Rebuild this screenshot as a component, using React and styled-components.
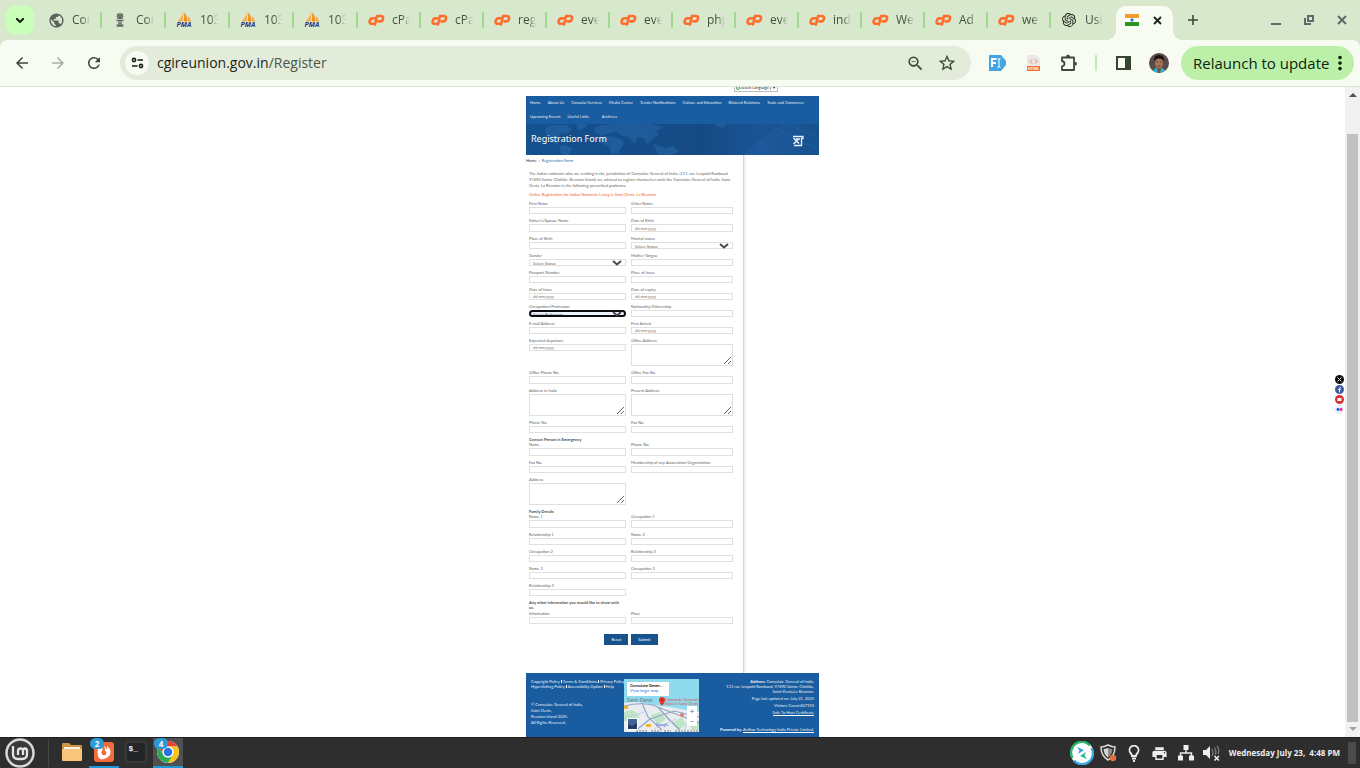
import React from 'react';
import styled, { createGlobalStyle, css } from 'styled-components';
import { MdPublic, MdArrowBack, MdArrowForward, MdRefresh, MdZoomOut, MdStarBorder, MdPrint, MdMoreVert } from 'react-icons/md';
import { SiOpenai } from 'react-icons/si';

const GlobalStyle = createGlobalStyle`
  * { box-sizing: border-box; }
  html, body { margin: 0; padding: 0; }
  body { font-family: 'Open Sans', 'Noto Sans', sans-serif; background: #fff; }
  button, input, select, textarea { font-family: inherit; margin: 0; }
  svg { display: block; flex: none; }
`;

const Desktop = styled.div`
  display: flex;
  flex-direction: column;
  height: 100vh;
  overflow: hidden;
`;

/* ---------- Browser: tab strip ---------- */

const TabStrip = styled.header`
  display: flex;
  align-items: flex-end;
  flex: none;
  height: 40px;
  background: #d8e8cc;
`;

const PlainButton = styled.button`
  display: flex;
  align-items: center;
  justify-content: center;
  flex: none;
  border: 0;
  padding: 0;
  background: none;
  color: ${(p) => p.$color || '#3b4a36'};
  width: ${(p) => p.$width || 36}px;
  height: ${(p) => p.$height || 34}px;
`;

const TabSearch = styled(PlainButton)`
  width: 28px;
  height: 28px;
  margin: 0 4px 6px 6px;
  border-radius: 9px;
  background: #c9ffb8;
`;

const Tab = styled.button`
  display: flex;
  align-items: center;
  gap: 8px;
  flex: none;
  width: ${(p) => (p.$wide ? 64 : 63)}px;
  height: 16px;
  margin-bottom: 12px;
  padding: 0 2px 0 10px;
  border: 0;
  border-right: 2px solid ${(p) => (p.$last ? 'transparent' : '#a0d890')};
  background: none;
  color: #45503f;
  text-align: left;
`;

const TabIcon = styled.span`
  display: flex;
  align-items: center;
  justify-content: center;
  flex: none;
  width: 16px;
`;

const TabText = styled.span`
  flex: 1;
  min-width: 0;
  white-space: nowrap;
  font-size: 12px;
  line-height: 16px;
  mask-image: linear-gradient(to right, #000 10px, transparent 18px);
`;

const ActiveTab = styled.div`
  position: relative;
  display: flex;
  align-items: center;
  justify-content: space-between;
  flex: none;
  width: 57px;
  height: 34px;
  margin-left: 2px;
  padding: 0 8px 6px 9px;
  border-radius: 10px 10px 0 0;
  background: #f8fbf2;
  &::before, &::after {
    content: '';
    position: absolute;
    bottom: 0;
    width: 10px;
    height: 10px;
  }
  &::before { left: -10px; background: radial-gradient(circle at 0 0, transparent 10px, #f8fbf2 10px); }
  &::after { right: -10px; background: radial-gradient(circle at 100% 0, transparent 10px, #f8fbf2 10px); }
`;

const WindowControls = styled.div`
  display: flex;
  margin-left: auto;
  padding-right: 2px;
`;

/* ---------- Browser: toolbar ---------- */

const ToolbarBack = styled.div`
  flex: none;
  background: #d8e8cc;
`;

const Toolbar = styled.div`
  display: flex;
  align-items: center;
  height: 47px;
  padding: 0 6px 0 4px;
  border-bottom: 1px solid #dce5d3;
  border-radius: 8px 8px 0 0;
  background: #f8fbf2;
`;

const Omnibox = styled.div`
  display: flex;
  align-items: center;
  flex: 1;
  height: 34px;
  margin: 0 8px;
  padding: 0 8px 0 5px;
  border-radius: 17px;
  background: #e3ecdb;
`;

const SiteInfo = styled(PlainButton)`
  width: 24px;
  height: 24px;
  border-radius: 50%;
  background: #f8fbf2;
`;

const Url = styled.div`
  flex: 1;
  padding-left: 8px;
  font-size: 14px;
  line-height: 20px;
  color: #1c2419;
  span { color: #4d5749; }
`;

const ToolDivider = styled.span`
  flex: none;
  width: 2px;
  height: 16px;
  margin: 0 8px;
  background: #bcf0a9;
`;

const Relaunch = styled.button`
  display: flex;
  align-items: center;
  justify-content: space-between;
  flex: none;
  width: 173px;
  height: 34px;
  margin-left: 4px;
  padding: 0 5px 0 12px;
  border: 0;
  border-radius: 17px;
  background: #bcf0a9;
  color: #10240c;
  font-size: 15px;
  white-space: nowrap;
`;

/* ---------- Viewport ---------- */

const Viewport = styled.div`
  position: relative;
  display: flex;
  flex: 1;
  min-height: 0;
  background: #fff;
`;

const Scroller = styled.main`
  display: flex;
  justify-content: center;
  flex: 1;
  min-width: 0;
  overflow: hidden;
`;

const Scrollbar = styled.div`
  display: flex;
  flex-direction: column;
  align-items: center;
  flex: none;
  width: 15px;
  padding: 6px 0;
  background: #f1f1f1;
`;

const ScrollThumb = styled.div`
  flex: 1;
  width: 11px;
  margin: 37px 0 5px;
  background: #c1c1c1;
`;

const SocialRail = styled.nav`
  position: absolute;
  top: 288px;
  right: 16px;
  display: flex;
  flex-direction: column;
  gap: 1px;
  a { display: block; }
`;

const Site = styled.div`
  display: flex;
  flex-direction: column;
  width: 293px;
  font-family: Lato, 'Open Sans', sans-serif;
  font-size: 4px;
  line-height: 6px;
  color: #5f5f5f;
`;

const LanguageBar = styled.div`
  display: flex;
  align-items: flex-end;
  justify-content: flex-end;
  flex: none;
  height: 5px;
  margin: 0 41px 4px 0;
  overflow: hidden;
`;

const LanguagePicker = styled.button`
  display: flex;
  align-items: center;
  gap: 1px;
  height: 8px;
  padding: 0 1px;
  border: 1px solid #bbb;
  background: #fff;
  font-size: 4px;
  line-height: 6px;
  color: #222;
  white-space: nowrap;
  i { width: 1px; height: 4px; background: #aaa; }
`;

const MainNav = styled.nav`
  flex: none;
  background: #1a5ca0;
`;

const NavRow = styled.div`
  display: flex;
  gap: 7px;
  height: 14px;
  padding-left: 4px;
  a {
    color: #e4edf6;
    text-decoration: none;
    line-height: 14px;
    white-space: nowrap;
  }
  a:nth-child(3) { margin-left: ${(p) => (p.$second ? 6 : 0)}px; }
`;

const Banner = styled.div`
  position: relative;
  display: flex;
  align-items: center;
  justify-content: space-between;
  flex: none;
  height: 31px;
  padding: 0 15px 2px 5px;
  overflow: hidden;
  background: linear-gradient(to right, #13518f, #164a84 60%, #1a5496 80%, #124a85);
  h1 {
    position: relative;
    margin: 0;
    font-family: 'Noto Sans', sans-serif;
    font-size: 9px;
    line-height: 12px;
    font-weight: 400;
    color: #fff;
  }
  > svg { position: relative; top: 2px; }
`;

const BannerMap = styled.div`
  position: absolute;
  inset: 0;
`;

const Content = styled.section`
  flex: 1;
  width: 218px;
  padding: 3px 10px 0 3px;
  border-right: 1px solid #d6d6d6;
  box-shadow: 1px 0 2px #e4e4e4;
`;

const Breadcrumb = styled.div`
  display: flex;
  gap: 2px;
  margin: 0 0 7px -3px;
  color: #444;
  a { color: #333; text-decoration: none; }
  a:last-child { color: #1a6fb5; }
`;

const Intro = styled.p`
  margin: 0 0 3px;
  line-height: 6px;
  white-space: nowrap;
  color: ${(p) => (p.$accent ? '#f0602f' : '#666')};
`;

const FormGrid = styled.div`
  display: grid;
  grid-template-columns: 97fr 102fr;
  column-gap: 5px;
`;

const GroupTitle = styled.h2`
  grid-column: 1;
  margin: 0;
  padding-bottom: ${(p) => (p.$long ? 1 : 0)}px;
  font-size: 4px;
  line-height: 5px;
  font-weight: 700;
  white-space: pre-line;
  color: #4c4c4c;
`;

const Field = styled.div`
  display: flex;
  flex-direction: column;
  grid-column: ${(p) => p.$col};
  padding-bottom: 4px;
  label {
    height: 6px;
    line-height: 5px;
    white-space: nowrap;
  }
`;

const control = css`
  width: 100%;
  border: 1px solid #e0e0e0;
  border-radius: 0;
  outline: 0;
  background: #fff;
  color: #666;
  font-size: 4px;
  line-height: 5px;
`;

const TextInput = styled.input`
  ${control}
  height: ${(p) => (p.$tall ? 8 : 7)}px;
  padding: 0 3px;
  &::placeholder { color: #777; opacity: 1; }
`;

const TextArea = styled.textarea`
  ${control}
  display: block;
  height: 22px;
  padding: 1px;
`;

const SelectWrap = styled.div`
  position: relative;
  svg { position: absolute; right: 4px; top: 1px; pointer-events: none; }
`;

const SelectBox = styled.select`
  ${control}
  display: block;
  appearance: none;
  height: 7px;
  padding: 1px 3px 0;
  ${(p) => p.$focused && css`
    border: 2px solid #0b0d10;
    border-radius: 4px;
    background: #eef3fb;
    padding: 0 2px;
  `}
`;

const Actions = styled.div`
  display: flex;
  justify-content: center;
  gap: 3px;
  padding: 6px 0 28px;
`;

const ActionButton = styled.button`
  height: 11px;
  padding: 0 7px;
  border: 0;
  background: #17528c;
  color: #fff;
  font-size: 4px;
  line-height: 11px;
`;

/* ---------- Site footer ---------- */

const SiteFooter = styled.footer`
  display: flex;
  flex: none;
  height: 64px;
  padding: 6px 5px 5px;
  background: #1a5ca0;
  color: #e6eef7;
  line-height: 5px;
  a { color: inherit; text-decoration: none; white-space: nowrap; }
`;

const FooterLeft = styled.div`
  flex: 93 1 0;
  min-width: 0;
  white-space: nowrap;
`;

const FooterLinks = styled.div`
  display: flex;
  gap: 1px;
  i { flex: none; width: 1px; height: 3px; margin-top: 1px; background: #fff; }
`;

const Copyright = styled.p`
  margin: 13px 0 0;
  line-height: 6px;
`;

const FooterMap = styled.div`
  position: relative;
  flex: none;
  width: 75px;
  height: 53px;
  overflow: hidden;
`;

const MapCard = styled.div`
  position: absolute;
  left: 3px;
  top: 3px;
  width: 42px;
  height: 14px;
  padding: 1px 3px;
  background: #fff;
  line-height: 5px;
  color: #111;
  white-space: nowrap;
  b { display: block; }
  a { color: #1a73e8; }
`;

const MapLabel = styled.span`
  position: absolute;
  left: ${(p) => p.$x}px;
  top: ${(p) => p.$y}px;
  font-size: ${(p) => p.$size || 4}px;
  line-height: 4px;
  color: ${(p) => p.$color};
  white-space: nowrap;
`;

const MapZoom = styled.div`
  position: absolute;
  right: 2px;
  bottom: 6px;
  display: flex;
  flex-direction: column;
  width: 10px;
  height: 20px;
  background: #fff;
  button {
    flex: 1;
    border: 0;
    padding: 0;
    background: none;
    color: #666;
    font-size: 8px;
    line-height: 8px;
  }
`;

const FooterRight = styled.address`
  flex: 115 1 0;
  min-width: 0;
  display: flex;
  flex-direction: column;
  align-items: flex-end;
  font-style: normal;
  text-align: right;
  white-space: nowrap;
  span { margin-top: 2px; }
  a { border-bottom: 1px solid #fff; }
  > a { margin-top: 2px; }
  p { margin: auto 0 0; }
`;

/* ---------- Taskbar ---------- */

const Taskbar = styled.footer`
  display: flex;
  align-items: center;
  flex: none;
  height: 31px;
  padding: 0 4px 0 5px;
  border-top: 1px solid #1f1f1f;
  background: #2e2e2e;
`;

const TaskDivider = styled.span`
  width: 1px;
  height: 28px;
  margin: 0 8px 0 13px;
  background: #474747;
`;

const TaskButton = styled.button`
  position: relative;
  display: flex;
  align-items: center;
  justify-content: center;
  flex: none;
  width: 30px;
  height: 30px;
  margin-right: 2px;
  padding: 0;
  border: 0;
  border-bottom: 2px solid ${(p) => (p.$running ? '#1e9bd7' : 'transparent')};
  background: ${(p) => (p.$active ? '#505050' : 'none')};
`;

const Badge = styled.span`
  position: absolute;
  left: 1px;
  top: 0;
  width: 14px;
  height: 11px;
  border-radius: 6px;
  background: #2a9bd6;
  color: #fff;
  font-size: 8px;
  font-weight: 700;
  line-height: 11px;
  text-align: center;
`;

const Tray = styled.div`
  display: flex;
  align-items: center;
  margin-left: auto;
`;

const TrayButton = styled(PlainButton)`
  width: 26px;
  height: 30px;
  color: #eee;
`;

const Clock = styled.time`
  padding: 0 8px 0 4px;
  font-size: 8px;
  font-weight: 700;
  line-height: 12px;
  color: #eee;
  white-space: pre;
`;

const ShowDesktop = styled.button`
  width: 8px;
  height: 22px;
  padding: 0;
  border: 0;
  background: #4b4b4b;
`;

/* ---------- Drawings ---------- */

const Svg = ({ w, h = w, box, children, ...rest }) => (
  <svg width={w} height={h} viewBox={box || `0 0 ${w} ${h}`} fill="none" aria-hidden="true" {...rest}>{children}</svg>
);

const CpanelIcon = () => (
  <Svg w={17} h={12} stroke="#ff6c2c" strokeWidth="2.600" strokeLinecap="round" strokeLinejoin="round">
    <path d="M7.200 4.200H4.500Q2.300 4.200 1.700 7T4 9.800H5" />
    <path d="M7 10.500 9 2H12.500Q15.600 2 15 4.800T12 7.400H10.500" />
  </Svg>
);

const PmaIcon = () => (
  <Svg w={16}>
    <path d="M1.500 9.500Q5 6 6.500 1.500 7.500 5 6.500 9.500Z" fill="#fbb04e" />
    <path d="M7.500 9.500Q9 5 7.500 0 11.500 4 11.500 9.500Z" fill="#f68b1f" />
    <path d="M12.200 9.500Q12.500 6 11.500 3.500 14.500 6 15 9.500Z" fill="#f9a63f" />
    <text x="8" y="15" textAnchor="middle" fontFamily="Open Sans, sans-serif" fontSize="7" fontWeight="700" fontStyle="italic" fill="#34347c">PMA</text>
  </Svg>
);

const EmblemIcon = () => (
  <Svg w={12} h={16} box="2 0 12 16">
    <path d="M5 2 6.500 1 8 1.500 9.500 1 11 2 11.500 4.500 10.500 7H5.500L4.500 4.500Z" fill="#737b6f" />
    <path d="M4 7.500H12V9.500H4Z" fill="#99a192" />
    <path d="M6 9.500H10V12H11.500V15H4.500V12H6Z" fill="#858d80" />
    <path d="M6 3.500h1M9 3.500h1M7 5.500h2M6 8.500h4M6 13.500h4" stroke="#4f564b" />
  </Svg>
);

const FlagIcon = () => (
  <Svg w={14} h={12}>
    <path d="M0 0H14V4H0Z" fill="#f99a2c" />
    <path d="M0 4H14V8H0Z" fill="#fff" />
    <path d="M0 8H14V12H0Z" fill="#2c9420" />
    <circle cx="7" cy="6" r="1.700" fill="#2e7fd8" />
  </Svg>
);

const SiteInfoIcon = () => (
  <Svg w={13} h={12} stroke="#1f281b" strokeWidth="1.600">
    <circle cx="3" cy="3" r="1.600" /><path d="M6.500 3H12" />
    <circle cx="10" cy="9" r="1.600" /><path d="M1 9H6.500" />
  </Svg>
);

const PuzzleIcon = () => (
  <Svg w={18} stroke="currentColor" strokeWidth="1.800" strokeLinejoin="round">
    <path d="M2 3.500H14V16H2V12.500Q4.500 12 4.500 9.800T2 7Z" />
    <path d="M6 3Q6 .5 8 .5T10 3Z" fill="currentColor" stroke="none" />
    <path d="M14.500 7.800Q17 7.800 17 9.800T14.500 11.800Z" fill="currentColor" stroke="none" />
  </Svg>
);

const FontIcon = () => (
  <Svg w={17} h={16}>
    <path d="M0 0H12L17 6V10L12 16H0Z" fill="#45a4e3" />
    <path d="M3 12V4H7.500M3 8H7" stroke="#fff" strokeWidth="1.800" />
    <path d="M8.500 3.500Q10 3.500 10 5V11Q10 12.500 8.500 12.500M11.500 3.500Q10 3.500 10 5M11.500 12.500Q10 12.500 10 11" stroke="#fff" />
  </Svg>
);

const HtmlIcon = () => (
  <Svg w={13} h={17}>
    <path d="M0 0H9L13 4V11H0Z" fill="#e8e8e4" />
    <path d="M0 11H13V16H0Z" fill="#f4683a" />
    <path d="M5 4.500 3 6.500 5 8.500M8 4.500 10 6.500 8 8.500" stroke="#f07a55" />
    <text x="6.500" y="15" textAnchor="middle" fontFamily="Open Sans, sans-serif" fontSize="4" fontWeight="700" fill="#fff">HTML</text>
  </Svg>
);

const SidePanelIcon = () => (
  <Svg w={15} h={14}>
    <path d="M1 1H14V13H1Z" stroke="#36452f" strokeWidth="2" />
    <path d="M9 1H14V13H9Z" fill="#36452f" />
  </Svg>
);

const AvatarIcon = () => (
  <Svg w={20}>
    <defs><clipPath id="avatar"><circle cx="10" cy="10" r="10" /></clipPath></defs>
    <g clipPath="url(#avatar)">
      <path d="M0 0H20V20H0Z" fill="#5a4a48" />
      <path d="M4 20 5 16 8 15H12L15 16 17 20Z" fill="#28b6d8" />
      <ellipse cx="10" cy="10" rx="4" ry="5.500" fill="#a8745a" />
      <path d="M5.500 9Q4 2 10 2T14.500 9Q14 5.500 10 5.500T5.500 9Z" fill="#17120f" />
      <path d="M8 15H12L11 20H9Z" fill="#7c5040" />
      <path d="M7.500 9H9M11 9H12.500M8.500 13H11.500" stroke="#5e3c2e" />
    </g>
  </Svg>
);

const ChevronIcon = () => (
  <Svg w={10} h={6}><path d="M1 1 5 4.500 9 1" stroke="#4a4a4a" strokeWidth="2" /></Svg>
);

const WorldMap = () => (
  <BannerMap>
    <Svg w="100%" h={31} box="0 0 293 31" preserveAspectRatio="xMinYMin slice">
      <g fill="#2a6bb0" opacity=".5">
        <path d="M19 4 25 1H40L46 5 40 10 36 8 32 12 35 16 31 21 25 17 20 11Z" />
        <path d="M33 22 40 21 46 25 42 31H36Z" />
        <path d="M50 0H62L58 5 52 6Z" />
        <path d="M68 4 75 1 90 0H125L138 3 130 7 133 11 126 15 121 20 118 14 112 13 108 20 103 13 96 12 91 8 84 9 76 12 70 9Z" />
        <path d="M74 13 86 12 96 16 98 20 92 29 86 31 83 22 75 19Z" />
        <path d="M127 20 140 24 147 22 153 27 146 31H133Z" />
        <path d="M190 0H201L197 4 191 3Z" />
      </g>
      <path d="M215 31 255 0H293V31Z" fill="#2b6db5" opacity=".2" />
      <path d="M240 0 293 26M262 0 293 14" stroke="#3d80c6" opacity=".25" />
    </Svg>
  </BannerMap>
);

const ScrollIcon = () => (
  <Svg w={12} h={12} stroke="#e8f0f8">
    <path d="M1 1.500H11V3.500H9.500V10.500H2" strokeWidth="1.300" />
    <path d="M1.500 3 7 8.500M6.500 4 1.500 9M4 4H8" strokeWidth="1.500" />
  </Svg>
);

const StreetMap = () => (
  <Svg w={75} h={53}>
    <path d="M0 0H75V53H0Z" fill="#90daee" />
    <path d="M0 24Q10 22 20 24T38 27Q48 28 56 30L75 33V53H0Z" fill="#e9edf0" />
    <path d="M0 33 8 31 16 36 12 43 0 42ZM26 36 36 33 42 40 34 46ZM48 44 58 38 62 46 54 51ZM66 44 75 41V53H68Z" fill="#bfe5c6" />
    <path d="M0 27Q20 22 34 28T60 38L75 44M18 24 24 38 40 53M34 28Q44 40 58 53M10 53 26 40 50 32 75 38" stroke="#8ea6c6" strokeWidth="1.200" />
    <path d="M0 40 20 33M30 50 52 40M60 53 66 34" stroke="#c3cddb" />
    <path d="M38 18a3 3 0 0 1 3 3q0 2.500-3 6q-3-3.500-3-6a3 3 0 0 1 3-3Z" fill="#e6352b" />
    <circle cx="38" cy="21" r="1" fill="#8f1d17" />
    <circle cx="58" cy="36" r="2" fill="#e77a76" />
    <path d="M22 45H27V48H22ZM0 27H4V30H0Z" fill="#f5b72a" />
    <path d="M3 39H14V51H3Z" fill="#fff" />
    <path d="M4 40H13V50H4Z" fill="#243a60" />
    <path d="M4 40H13V44L8 47 4 45Z" fill="#416593" />
    <path d="M7 51H75V53H7Z" fill="#edf1f3" />
    <path d="M12 52H24M27 52H37M40 52H47M51 52H74" stroke="#777" strokeDasharray="2 1" />
  </Svg>
);

const MintIcon = () => (
  <Svg w={30}>
    <circle cx="15" cy="15" r="13.500" fill="#3a3a3a" stroke="#d8d8d8" strokeWidth="2.500" />
    <path d="M8 8V16Q8 21 13 21H17Q22 21 22 16V13Q22 10.500 20 10.500T18 13V17M18 13Q18 10.500 15.500 10.500T13 13V17" stroke="#e4e4e4" strokeWidth="2.300" />
  </Svg>
);

const FolderIcon = () => (
  <Svg w={20} h={19}>
    <path d="M0 1Q0 0 1 0H7L9 2H19Q20 2 20 3V8H0Z" fill="#cf9444" />
    <path d="M2 4H18V8H2Z" fill="#f6f1e8" />
    <path d="M0 6H20V17Q20 18 19 18H1Q0 18 0 17Z" fill="#f7c67c" />
  </Svg>
);

const FirefoxIcon = () => (
  <Svg w={20}>
    <rect width="20" height="20" rx="3" fill="#f56a3d" />
    <path d="M10 4Q12 5 12.500 7 14 6 13 4 17 7 16.500 11T10 17 3.500 11Q3 8 5 5L6 7Q7.500 5.500 9 7L8 9Q6.500 10 8 12T12 12Q13 10 11 9 11 6 10 4Z" fill="#fff" />
    <circle cx="10" cy="11" r="2.300" fill="#f56a3d" />
  </Svg>
);

const TerminalIcon = () => (
  <Svg w={22}>
    <rect x="1" y="1" width="20" height="20" rx="3" fill="#232527" stroke="#454849" />
    <text x="3.500" y="10" fontFamily="Liberation Mono, monospace" fontSize="8" fontWeight="700" fill="#f2f2f2">$_</text>
  </Svg>
);

const ChromeIcon = () => (
  <Svg w={24} box="0 0 48 48">
    <circle cx="24" cy="24" r="22" fill="#fff" />
    <path d="M5 13A22 22 0 0 1 43 13H24A11 11 0 0 0 14.500 29.500Z" fill="#ea4335" />
    <path d="M43 13A22 22 0 0 1 24 46L33.500 29.500A11 11 0 0 0 24 13Z" fill="#fbc116" />
    <path d="M5 13 14.500 29.500A11 11 0 0 0 33.500 29.500L24 46A22 22 0 0 1 5 13Z" fill="#2da94f" />
    <circle cx="24" cy="24" r="11" fill="#fff" />
    <circle cx="24" cy="24" r="8.500" fill="#2273e6" />
  </Svg>
);

const SyncIcon = () => (
  <Svg w={24}>
    <circle cx="12" cy="12" r="11.500" fill="#fff" />
    <path d="M2.500 17A10.800 10.800 0 0 1 20 4.500" stroke="#2ab56b" strokeWidth="2.400" />
    <path d="M21.500 7A10.800 10.800 0 0 1 4 19.500" stroke="#39a9e4" strokeWidth="2.400" />
    <path d="M7 6 14 9 8 13 9.500 9.500Z" fill="#2f9fe0" />
    <path d="M17 18 10 15 16 11 14.500 14.500Z" fill="#2ab58b" />
  </Svg>
);

const ShieldIcon = () => (
  <Svg w={18}>
    <path d="M9 1Q13 3 16 3 16 12 9 16 2 12 2 3 5 3 9 1Z" stroke="#dcdcdc" strokeWidth="1.500" />
    <path d="M9 4Q12 5 13.500 5 13 11 9 13.500Z" fill="#8b8b8b" />
    <path d="M9 4Q6 5 4.500 5 5 11 9 13.500Z" fill="#d6d6d6" />
    <circle cx="14" cy="14" r="3.200" fill="#e0703c" />
  </Svg>
);

const BulbIcon = () => (
  <Svg w={12} h={17} stroke="#eee" strokeWidth="1.800">
    <path d="M4 11Q4 9.500 2.500 8A4.500 4.500 0 1 1 9.500 8Q8 9.500 8 11Z" />
    <path d="M4 13.500H8M5 16H7" />
  </Svg>
);

const NetworkIcon = () => (
  <Svg w={16}>
    <path d="M5.500 0H10.500V5H5.500ZM0 10.500H5V15.500H0ZM11 10.500H16V15.500H11Z" fill="#eee" />
    <path d="M8 5V8M2.500 11V8H13.500V11" stroke="#eee" strokeWidth="1.400" />
  </Svg>
);

const VolumeIcon = () => (
  <Svg w={17} h={16}>
    <path d="M0 5H3L7 1V14L3 10H0Z" fill="#eee" />
    <path d="M9 4Q11 7.500 9 11M11.500 2.500Q14 7 12 10M14 1Q17 5 15 9" stroke="#777" strokeWidth="1.400" />
    <path d="M11.500 11 16 15.500M16 11 11.500 15.500" stroke="#eee" strokeWidth="1.500" />
  </Svg>
);

const SocialIcon = ({ kind }) => (
  <Svg w={9}>
    {kind === 'x' && <><circle cx="4.500" cy="4.500" r="4.500" fill="#0c0c0c" /><path d="M2.500 2.500 6.500 6.500M6.500 2.500 2.500 6.500" stroke="#ddd" /></>}
    {kind === 'facebook' && <><circle cx="4.500" cy="4.500" r="4.500" fill="#3c5ba0" /><path d="M5.800 2.500Q4.500 2.300 4.500 3.500V7.500M3.200 4.500H5.800" stroke="#fff" /></>}
    {kind === 'youtube' && <><circle cx="4.500" cy="4.500" r="4.500" fill="#d8322f" /><path d="M2.500 3H6.500V6H2.500Z" fill="#fff" /></>}
    {kind === 'flickr' && <><circle cx="4.500" cy="4.500" r="4.500" fill="#ececf2" /><circle cx="3" cy="4.500" r="1.400" fill="#0d63dc" /><circle cx="6" cy="4.500" r="1.400" fill="#ff1a86" /></>}
  </Svg>
);

/* ---------- Data ---------- */

const favicons = {
  globe: <MdPublic size={17} color="#5a6160" />,
  emblem: <EmblemIcon />,
  pma: <PmaIcon />,
  cpanel: <CpanelIcon />,
  openai: <SiOpenai size={14} color="#1f241d" />,
};

const tabs = [
  ['globe', 'Cor'], ['emblem', 'Cor'], ['pma', '103'], ['pma', '103'], ['pma', '103'],
  ['cpanel', 'cPa'], ['cpanel', 'cPa'], ['cpanel', 'reg'], ['cpanel', 'eve'], ['cpanel', 'eve'],
  ['cpanel', 'php'], ['cpanel', 'eve'], ['cpanel', 'ind'], ['cpanel', 'We'], ['cpanel', 'Ad'],
  ['cpanel', 'we'], ['openai', 'Usi'],
];

const navFirst = ['Home', 'About Us', 'Consular Services', 'Media Center', 'Tender Notifications', 'Culture and Education', 'Bilateral Relations', 'Trade and Commerce'];
const navSecond = ['Upcoming Events', 'Useful Links', 'Archives'];

const DATE = 'dd.mm.yyyy';
const f = (label, extra = {}) => ({ label, ...extra });

const rows = [
  { cells: [f('First Name'), f('Other Name')] },
  { tall: true, cells: [f("Father's/Spouse Name"), f('Date of Birth', { placeholder: DATE })] },
  { cells: [f('Place of Birth'), f('Marital status', { select: 'Select Status' })] },
  { cells: [f('Gender', { select: 'Select Status' }), f('Mother Tongue')] },
  { cells: [f('Passport Number'), f('Place of Issue')] },
  { cells: [f('Date of Issue', { placeholder: DATE }), f('Date of expiry', { placeholder: DATE })] },
  { cells: [f('Occupation/Profession', { select: 'Select Profession', focused: true }), f('Nationality/Citizenship')] },
  { cells: [f('E-mail Address'), f('First Arrival', { placeholder: DATE })] },
  { cells: [f('Expected departure', { placeholder: DATE }), f('Office Address', { area: true })] },
  { tall: true, cells: [f('Office Phone No.'), f('Office Fax No.')] },
  { cells: [f('Address in India', { area: true }), f('Present Address', { area: true })] },
  { cells: [f('Phone No.'), f('Fax No.')] },
  { title: 'Contact Person in Emergency' },
  { tall: true, cells: [f('Name'), f('Phone No.')] },
  { cells: [f('Fax No.'), f('Membership of any Association/Organization.')] },
  { cells: [f('Address', { area: true })] },
  { title: 'Family Details' },
  { tall: true, cells: [f('Name 1'), f('Occupation 1')] },
  { cells: [f('Relationship 1'), f('Name 2')] },
  { cells: [f('Occupation 2'), f('Relationship 2')] },
  { cells: [f('Name 3'), f('Occupation 3')] },
  { cells: [f('Relationship 3')] },
  { title: 'Any other information you would like to share with\nus.', long: true },
  { cells: [f('Information'), f('Place')] },
];

const FormField = ({ id, col, tall, label, placeholder, select, focused, area }) => (
  <Field $col={col}>
    <label htmlFor={id}>{label}</label>
    {area && <TextArea id={id} />}
    {select && (
      <SelectWrap>
        <SelectBox id={id} $focused={focused}><option>{select}</option></SelectBox>
        <ChevronIcon />
      </SelectWrap>
    )}
    {!area && !select && <TextInput id={id} type="text" placeholder={placeholder} $tall={tall} />}
  </Field>
);

const NavLinks = ({ items }) => items.map((item) => <a key={item} href="#top">{item}</a>);

export default function App() {
  return (
    <Desktop>
      <GlobalStyle />
      <TabStrip>
        <TabSearch aria-label="Search tabs"><Svg w={8} h={5}><path d="M0 0 4 4 8 0" stroke="#162012" strokeWidth="2" /></Svg></TabSearch>
        {tabs.map(([icon, text], i) => (
          <Tab key={i} $wide={i < 5} $last={i === tabs.length - 1}>
            <TabIcon>{favicons[icon]}</TabIcon>
            <TabText>{text}</TabText>
          </Tab>
        ))}
        <ActiveTab>
          <FlagIcon />
          <PlainButton $width={16} $height={16} aria-label="Close tab"><Svg w={9}><path d="M1 1 8 8M8 1 1 8" stroke="#1c2419" strokeWidth="1.800" /></Svg></PlainButton>
        </ActiveTab>
        <PlainButton $width={40} $height={40} aria-label="New tab"><Svg w={10}><path d="M5 0V10M0 5H10" stroke="currentColor" strokeWidth="1.600" /></Svg></PlainButton>
        <WindowControls>
          <PlainButton $width={33} $height={40} $color="#62686a" aria-label="Minimize"><Svg w={10}><path d="M0 9H10" stroke="currentColor" strokeWidth="2" /></Svg></PlainButton>
          <PlainButton $width={33} $height={40} $color="#62686a" aria-label="Restore"><Svg w={10}><path d="M4 1H9V6H4ZM1 3V9H7" stroke="currentColor" strokeWidth="2" /></Svg></PlainButton>
          <PlainButton $width={33} $height={40} $color="#62686a" aria-label="Close"><Svg w={10}><path d="M1 1 9 9M9 1 1 9" stroke="currentColor" strokeWidth="2" /></Svg></PlainButton>
        </WindowControls>
      </TabStrip>

      <ToolbarBack>
        <Toolbar>
          <PlainButton aria-label="Back"><MdArrowBack size={18} /></PlainButton>
          <PlainButton aria-label="Forward" $color="#a7aea2"><MdArrowForward size={18} /></PlainButton>
          <PlainButton aria-label="Reload"><MdRefresh size={18} /></PlainButton>
          <Omnibox>
            <SiteInfo aria-label="Site information"><SiteInfoIcon /></SiteInfo>
            <Url>cgireunion.gov.in<span>/Register</span></Url>
            <PlainButton $width={32} aria-label="Zoom"><MdZoomOut size={19} /></PlainButton>
            <PlainButton $width={32} aria-label="Bookmark"><MdStarBorder size={20} /></PlainButton>
          </Omnibox>
          <PlainButton aria-label="Font finder"><FontIcon /></PlainButton>
          <PlainButton aria-label="HTML viewer"><HtmlIcon /></PlainButton>
          <PlainButton aria-label="Extensions"><PuzzleIcon /></PlainButton>
          <ToolDivider />
          <PlainButton aria-label="Side panel"><SidePanelIcon /></PlainButton>
          <PlainButton aria-label="Profile"><AvatarIcon /></PlainButton>
          <Relaunch>Relaunch to update<MdMoreVert size={22} /></Relaunch>
        </Toolbar>
      </ToolbarBack>

      <Viewport>
        <Scroller>
          <Site>
            <LanguageBar>
              <LanguagePicker>
                <Svg w={4}><circle cx="2" cy="2" r="1.500" stroke="#3a9a5b" /></Svg>
                Select Language<i />▼
              </LanguagePicker>
            </LanguageBar>
            <MainNav>
              <NavRow><NavLinks items={navFirst} /></NavRow>
              <NavRow $second><NavLinks items={navSecond} /></NavRow>
            </MainNav>
            <Banner>
              <WorldMap />
              <h1>Registration Form</h1>
              <ScrollIcon />
            </Banner>
            <Content>
              <Breadcrumb><a href="#home">Home</a>›<a href="#form">Registration Form</a></Breadcrumb>
              <Intro>
                The Indian nationals who are residing in the jurisdiction of Consulate General of India, (111, rue Leopold Rambaud<br />
                97490 Sainte-Clotilde, Reunion Island) are advised to register themselves with the Consulate General of India, Saint<br />
                Denis, La Réunion in the following prescribed proforma.
              </Intro>
              <Intro $accent>Online Registration for Indian Nationals Living in Saint Denis, La Réunion.</Intro>
              <form onSubmit={(e) => e.preventDefault()}>
                <FormGrid>
                  {rows.map((row, r) => row.title
                    ? <GroupTitle key={r} $long={row.long}>{row.title}</GroupTitle>
                    : row.cells.map((cell, c) => (
                      <FormField key={`${r}-${c}`} id={`field-${r}-${c}`} col={c + 1} tall={row.tall} {...cell} />
                    )))}
                </FormGrid>
                <Actions>
                  <ActionButton type="reset">Reset</ActionButton>
                  <ActionButton type="submit">Submit</ActionButton>
                </Actions>
              </form>
            </Content>
            <SiteFooter>
              <FooterLeft>
                <FooterLinks><a href="#c">Copyright Policy</a><i /><a href="#t">Terms &amp; Conditions</a><i /><a href="#p">Privacy Policy</a></FooterLinks>
                <FooterLinks><a href="#h">Hyperlinking Policy</a><i /><a href="#a">Accessibility Option</a><i /><a href="#help">Help</a></FooterLinks>
                <Copyright>
                  © Consulate General of India,<br />Saint Denis,<br />Reunion Island 2025.<br />All Rights Reserved.
                </Copyright>
              </FooterLeft>
              <FooterMap>
                <StreetMap />
                <MapCard><b>Consulate Gener...</b><a href="#map">View larger map</a></MapCard>
                <MapLabel $x={3} $y={19} $size={5} $color="#66707a">Saint-Denis</MapLabel>
                <MapLabel $x={41} $y={19} $color="#dc4a43">Consulate General of</MapLabel>
                <MapLabel $x={41} $y={23} $color="#dc4a43">India in Saint Denis</MapLabel>
                <MapLabel $x={32} $y={44} $color="#3f6fd8">Google</MapLabel>
                <MapZoom><button type="button">+</button><button type="button">−</button></MapZoom>
              </FooterMap>
              <FooterRight>
                <div><b>Address:</b> Consulate General of India,</div>
                <div>111 rue Léopold Rambaud, 97490 Sainte-Clotilde,</div>
                <div>Saint-Denis,La Réunion.</div>
                <span>Page last updated on: July 21, 2025</span>
                <span>Visitors Count:407190</span>
                <a href="#cert">Safe To Host Certificate</a>
                <p><b>Powered by:</b> <a href="#ardhas">Ardhas Technology India Private Limited.</a></p>
              </FooterRight>
            </SiteFooter>
          </Site>
        </Scroller>
        <SocialRail>
          {['x', 'facebook', 'youtube', 'flickr'].map((kind) => <a key={kind} href={`#${kind}`} aria-label={kind}><SocialIcon kind={kind} /></a>)}
        </SocialRail>
        <Scrollbar>
          <Svg w={8} h={4}><path d="M0 4 4 0 8 4Z" fill="#505050" /></Svg>
          <ScrollThumb />
          <Svg w={8} h={4}><path d="M0 0 4 4 8 0Z" fill="#a3a3a3" /></Svg>
        </Scrollbar>
      </Viewport>

      <Taskbar>
        <PlainButton $width={30} $height={30} aria-label="Menu"><MintIcon /></PlainButton>
        <TaskDivider />
        <TaskButton aria-label="Files"><FolderIcon /></TaskButton>
        <TaskButton $running aria-label="Firefox"><FirefoxIcon /><Badge>2</Badge></TaskButton>
        <TaskButton aria-label="Terminal"><TerminalIcon /></TaskButton>
        <TaskButton $running $active aria-label="Chrome"><ChromeIcon /><Badge>4</Badge></TaskButton>
        <Tray>
          <TrayButton aria-label="Sync"><SyncIcon /></TrayButton>
          <TrayButton aria-label="Updates"><ShieldIcon /></TrayButton>
          <TrayButton aria-label="Tips"><BulbIcon /></TrayButton>
          <TrayButton aria-label="Printer"><MdPrint size={17} /></TrayButton>
          <TrayButton aria-label="Network"><NetworkIcon /></TrayButton>
          <TrayButton aria-label="Volume"><VolumeIcon /></TrayButton>
          <Clock>Wednesday July 23,  4:48 PM</Clock>
          <ShowDesktop aria-label="Show desktop" />
        </Tray>
      </Taskbar>
    </Desktop>
  );
}
